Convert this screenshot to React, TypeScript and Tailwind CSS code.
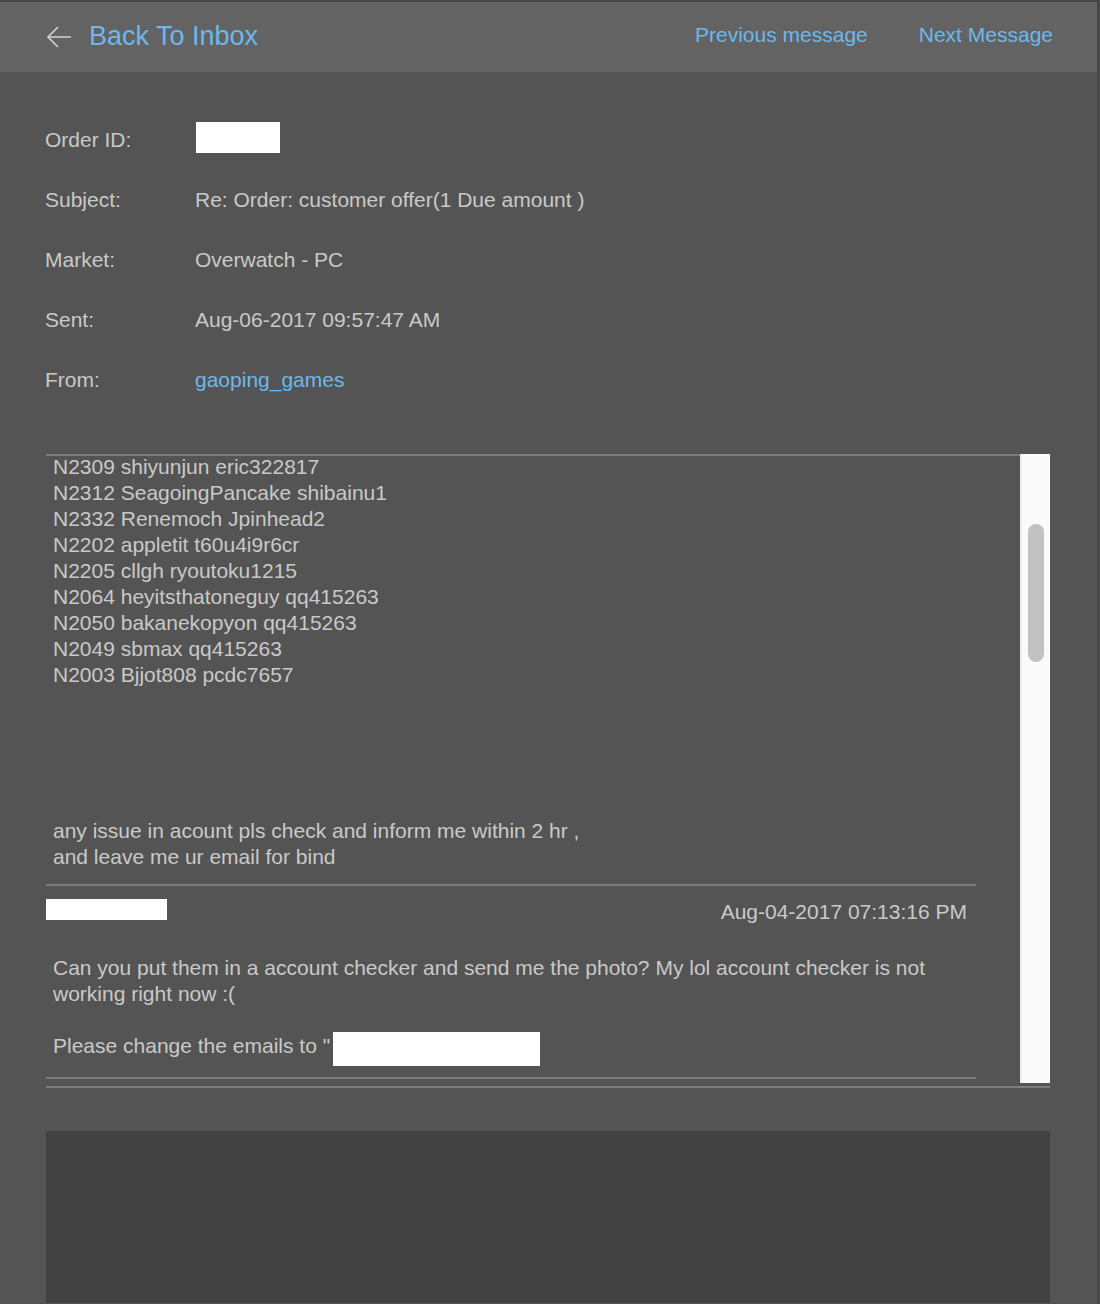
import React from "react";

const fields = [
  { label: "Subject:", value: "Re: Order: customer offer(1 Due amount )" },
  { label: "Market:", value: "Overwatch - PC" },
  { label: "Sent:", value: "Aug-06-2017 09:57:47 AM" },
];

const accountLines = [
  "N2309 shiyunjun eric322817",
  "N2312 SeagoingPancake shibainu1",
  "N2332 Renemoch Jpinhead2",
  "N2202 appletit t60u4i9r6cr",
  "N2205 cllgh ryoutoku1215",
  "N2064 heyitsthatoneguy qq415263",
  "N2050 bakanekopyon qq415263",
  "N2049 sbmax qq415263",
  "N2003 Bjjot808 pcdc7657",
  "",
  "",
  "",
  "",
  "",
  "any issue in acount pls check and inform me within 2 hr ,",
  "and leave me ur email for bind",
];

function BackArrow() {
  return (
    <svg width="26" height="24" viewBox="0 0 26 24" fill="none" className="text-[#d2d2d2]">
      <path d="M25 12H2.5M12 2L2 12l10 10" stroke="currentColor" strokeWidth="1.6" />
    </svg>
  );
}

function Scrollbar() {
  return (
    <div className="w-[30px] shrink-0 bg-[#fafafa] border-l-2 border-[#ededed] pt-[70px]">
      <div className="ml-[6px] w-[16px] h-[138px] rounded-full bg-[#c2c2c2]" />
    </div>
  );
}

export default function App() {
  return (
    <div
      className="min-h-[1304px] bg-[#545454] border-t-2 border-r-[3px] border-[#474747] text-[21px] text-[#c9c9c9]"
      style={{ fontFamily: '"Liberation Sans", Arial, sans-serif' }}
    >
      {/* Top navigation */}
      <header className="h-[70px] bg-[#636363] flex items-center pl-[46px] pr-[44px]">
        <BackArrow />
        <a className="ml-[17px] text-[27px] text-[#6cb8ec] -mt-[1px]">Back To Inbox</a>
        <div className="ml-auto flex items-center gap-[51px] -mt-[4px]">
          <a className="text-[#6cb8ec]">Previous message</a>
          <a className="text-[#6cb8ec]">Next Message</a>
        </div>
      </header>

      <main className="pl-[46px] pr-[47px] pt-[38px]">
        {/* Message details */}
        <div className="flex flex-col">
          <div className="h-[60px] flex items-center">
            <span className="w-[150px] -ml-[1px]">Order ID:</span>
            <span className="ml-[1px] w-[84px] h-[31px] bg-white -mt-[6px]" />
          </div>
          {fields.map((f) => (
            <div key={f.label} className="h-[60px] flex items-center">
              <span className="w-[150px] -ml-[1px]">{f.label}</span>
              <span>{f.value}</span>
            </div>
          ))}
          <div className="h-[60px] flex items-center">
            <span className="w-[150px] -ml-[1px]">From:</span>
            <a className="text-[#6cb8ec]">gaoping_games</a>
          </div>
        </div>

        {/* Conversation thread */}
        <div className="mt-[44px]">
          <div className="flex h-[629px]">
            <div className="flex-1 overflow-hidden border-t-2 border-[#7c7c7c] leading-[26px]">
              <div className="pl-[7px] -mt-[2px]">
                {accountLines.map((line, i) => (
                  <div key={i} className="h-[26px] whitespace-pre">
                    {line}
                  </div>
                ))}
              </div>
              <div className="mr-[44px] mt-[14px] h-[2px] bg-[#7c7c7c]" />

              <div className="mr-[44px] pl-[7px] pr-[9px]">
                <div className="flex items-center justify-between mt-[13px] h-[26px]">
                  <span className="-ml-[8px] w-[122px] h-[21px] bg-white -mt-[5px]" />
                  <span>Aug-04-2017 07:13:16 PM</span>
                </div>
                <div className="mt-[30px]">
                  <div className="h-[26px]">
                    Can you put them in a account checker and send me the photo? My lol account checker is not
                  </div>
                  <div className="h-[26px]">working right now :(</div>
                  <div className="h-[26px]" />
                  <div className="h-[26px] flex items-center">
                    <span>Please change the emails to "</span>
                    <span className="ml-[3px] w-[207px] h-[34px] bg-white mt-[6px]" />
                  </div>
                </div>
              </div>
              <div className="mr-[44px] mt-[18px] h-[2px] bg-[#7c7c7c]" />
            </div>
            <Scrollbar />
          </div>
          <div className="mt-[3px] h-[2px] bg-[#7c7c7c]" />
        </div>

        {/* Reply box */}
        <div className="mt-[43px] h-[172px] bg-[#424242]" />
      </main>
    </div>
  );
}
